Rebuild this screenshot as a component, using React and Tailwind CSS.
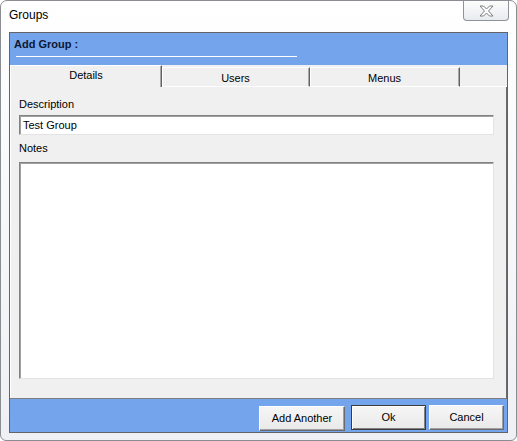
import React from "react";

const font = { fontFamily: '"Liberation Sans", Arial, sans-serif' };

function CloseGlyph() {
  return (
    <svg width="15" height="12" viewBox="0 0 15 12">
      <polygon
        points="1,1 4.5,1 7.5,4 10.5,1 14,1 9.5,6 14,11 10.5,11 7.5,8 4.5,11 1,11 5.5,6"
        fill="#ffffff"
        stroke="#7d7d7d"
        strokeWidth="1"
        strokeLinejoin="round"
      />
    </svg>
  );
}

function Btn({ children, def, className = "" }) {
  return (
    <div
      className={
        "h-[25px] flex items-center justify-center text-[11px] text-black bg-gradient-to-b from-[#f6f6f6] to-[#e9e9e9] border " +
        (def
          ? "border-[#3c3c3c] shadow-[inset_1px_1px_0_#ffffff,inset_-1px_-1px_0_#808080]"
          : "border-t-[#ffffff] border-l-[#ffffff] border-r-[#6a6a6a] border-b-[#6a6a6a] shadow-[inset_-1px_-1px_0_#a0a0a0]") +
        " " +
        className
      }
    >
      {children}
    </div>
  );
}

export default function App() {
  return (
    <div className="w-[517px] h-[441px] bg-white" style={font}>
      <div className="w-[517px] h-[441px] rounded-t-[7px] rounded-b-[6px] border border-[#8a8d92] bg-gradient-to-b from-[#ffffff] via-[#f7f8fa] to-[#eef0f3] flex flex-col px-[8px] pb-[7px]">
        {/* Title bar */}
        <div className="h-[31px] flex items-start shrink-0">
          <div className="pt-[7px] text-[12px] leading-[14px] text-black">Groups</div>
          <div className="ml-auto -mr-[1px] w-[46px] h-[20px] rounded-b-[4px] border border-t-0 border-[#8f9399] bg-gradient-to-b from-[#fdfdfd] to-[#e8ebef] flex items-center justify-center">
            <CloseGlyph />
          </div>
        </div>

        {/* Client area */}
        <div className="flex-1 flex flex-col border border-[#646464] bg-[#f0f0f0]">
          {/* Header */}
          <div className="h-[32px] bg-[#74a4ec] flex flex-col pl-[4px] pt-[5px] shrink-0">
            <div className="text-[11px] leading-[13px] font-bold text-[#0b1733]">Add Group :</div>
            <div className="ml-[2px] mt-[5px] w-[281px] h-[1px] bg-white" />
          </div>

          {/* Tabs */}
          <div className="h-[22px] flex shrink-0 text-[11px] text-black">
            <div className="w-[152px] h-[22px] border-t border-l border-r border-t-white border-l-white border-r-[#626262] shadow-[inset_-1px_0_0_#a8a8a8] flex justify-center pt-[3px] leading-[13px]">
              Details
            </div>
            <div className="w-[148px] h-[20px] mt-[2px] border-t border-b border-r border-t-white border-b-white border-r-[#626262] shadow-[inset_1px_0_0_#ffffff,inset_-1px_0_0_#a8a8a8] flex justify-center pt-[4px] leading-[13px]">
              Users
            </div>
            <div className="w-[150px] h-[20px] mt-[2px] border-t border-b border-r border-t-white border-b-white border-r-[#626262] shadow-[inset_1px_0_0_#ffffff,inset_-1px_0_0_#a8a8a8] flex justify-center pt-[4px] leading-[13px]">
              Menus
            </div>
            <div className="flex-1 border-b border-b-white" />
          </div>

          {/* Panel */}
          <div className="flex-1 flex flex-col border-l border-l-white border-r border-r-[#6a6a6a] pl-[8px] pr-[12px] pt-[11px] pb-[19px] text-[11px] text-black">
            <div className="leading-[13px]">Description</div>
            <div className="mt-[4px] h-[20px] bg-white border border-t-[#828282] border-l-[#828282] border-r-[#e3e3e3] border-b-[#e3e3e3] shadow-[inset_1px_1px_0_#a0a0a0] flex items-center pl-[3px] leading-[13px] shrink-0">
              Test Group
            </div>
            <div className="mt-[7px] leading-[13px]">Notes</div>
            <div className="mt-[7px] flex-1 bg-white border border-t-[#828282] border-l-[#828282] border-r-[#e3e3e3] border-b-[#e3e3e3] shadow-[inset_1px_1px_0_#a0a0a0]" />
          </div>

          {/* Bottom bar */}
          <div className="h-[34px] shrink-0 border-t border-t-[#7d7d7d] bg-[#74a4ec] flex items-start justify-end pt-[6px] pr-[3px]">
            <Btn className="w-[86px] mt-[1px]">Add Another</Btn>
            <Btn def className="w-[75px] ml-[6px]">Ok</Btn>
            <Btn className="w-[75px] ml-[3px]">Cancel</Btn>
          </div>
        </div>
      </div>
    </div>
  );
}
